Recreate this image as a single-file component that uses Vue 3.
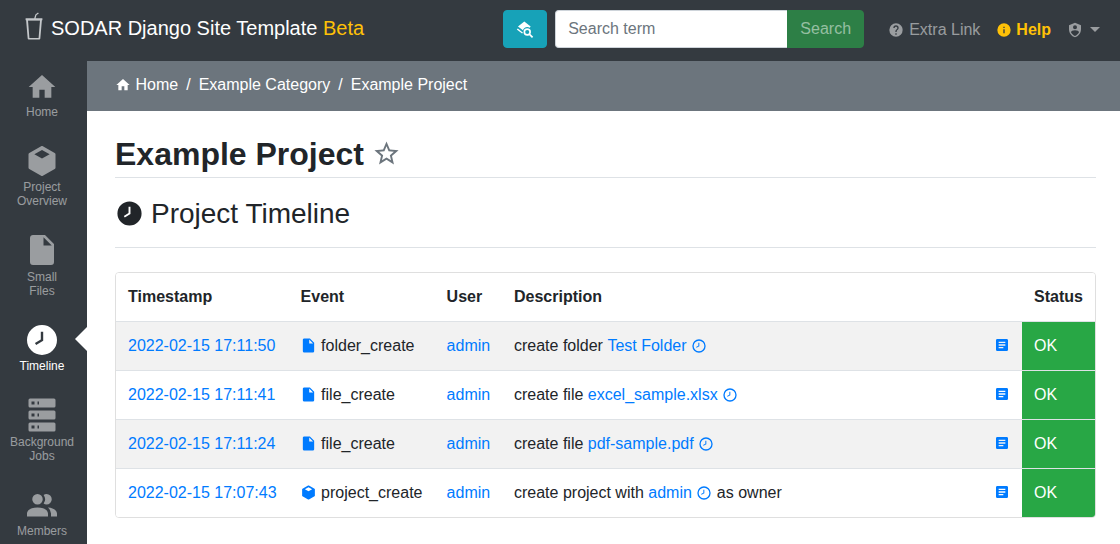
<script setup>
const P = {
  home: 'M10,20V14H14V20H19V12H22L12,3L2,12H5V20H10Z',
  cube: 'M21,16.5C21,16.88 20.79,17.21 20.47,17.38L12.57,21.82C12.41,21.94 12.21,22 12,22C11.79,22 11.59,21.94 11.43,21.82L3.53,17.38C3.21,17.21 3,16.88 3,16.5V7.5C3,7.12 3.21,6.79 3.53,6.62L11.43,2.18C11.59,2.06 11.79,2 12,2C12.21,2 12.41,2.06 12.57,2.18L20.47,6.62C20.79,6.79 21,7.12 21,7.5V16.5ZM12,4.6L6.9,7.5L12,10.4L17.1,7.5L12,4.6Z',
  file: 'M13,9V3.5L18.5,9M6,2C4.89,2 4,2.89 4,4V20A2,2 0 0,0 6,22H18A2,2 0 0,0 20,20V8L14,2H6Z',
  clock: 'M12,2A10,10 0 1,0 22,12A10,10 0 0,0 12,2ZM12.8,6.5V12.5L8.1,15.4L7.3,14L11.2,11.6V6.5H12.8Z',
  clockO: 'M12,2A10,10 0 1,0 22,12A10,10 0 0,0 12,2ZM12,20A8,8 0 1,1 20,12A8,8 0 0,1 12,20ZM12.5,7V12.3L8.3,14.8L7.6,13.6L11,11.5V7H12.5Z',
  server: 'M4,1H20A1,1 0 0,1 21,2V6A1,1 0 0,1 20,7H4A1,1 0 0,1 3,6V2A1,1 0 0,1 4,1M4,9H20A1,1 0 0,1 21,10V14A1,1 0 0,1 20,15H4A1,1 0 0,1 3,14V10A1,1 0 0,1 4,9M4,17H20A1,1 0 0,1 21,18V22A1,1 0 0,1 20,23H4A1,1 0 0,1 3,22V18A1,1 0 0,1 4,17M9,5H10V3H9V5M9,13H10V11H9V13M9,21H10V19H9V21M5,3V5H7V3H5M5,11V13H7V11H5M5,19V21H7V19H5Z',
  members: 'M16 17V19H2V17S2 13 9 13 16 17 16 17M12.5 7.5A3.5 3.5 0 1 0 9 11A3.5 3.5 0 0 0 12.5 7.5M15.94 13A5.32 5.32 0 0 1 18 17V19H22V17S22 13.37 15.94 13M15 4A3.39 3.39 0 0 0 13.07 4.59A5 5 0 0 1 13.07 10.41A3.39 3.39 0 0 0 15 11A3.5 3.5 0 0 0 15 4Z',
  help: 'M15.07,11.25L14.17,12.17C13.45,12.89 13,13.5 13,15H11V14.5C11,13.39 11.45,12.39 12.17,11.67L13.41,10.41C13.78,10.05 14,9.55 14,9C14,7.89 13.1,7 12,7A2,2 0 0,0 10,9H8A4,4 0 0,1 12,5A4,4 0 0,1 16,9C16,9.88 15.64,10.67 15.07,11.25M13,19H11V17H13M12,2A10,10 0 0,0 2,12A10,10 0 0,0 12,22A10,10 0 0,0 22,12C22,6.47 17.5,2 12,2Z',
  info: 'M13,9H11V7H13M13,17H11V11H13M12,2A10,10 0 0,0 2,12A10,10 0 0,0 12,22A10,10 0 0,0 22,12A10,10 0 0,0 12,2Z',
  star: 'M12,15.39L8.24,17.66L9.23,13.38L5.91,10.5L10.29,10.13L12,6.09L13.71,10.13L18.09,10.5L14.77,13.38L15.76,17.66M22,9.24L14.81,8.63L12,2L9.19,8.63L2,9.24L7.45,13.97L5.82,21L12,17.27L18.18,21L16.54,13.97L22,9.24Z',
  text: 'M14,17H7V15H14M17,13H7V11H17M17,9H7V7H17M19,3H5C3.89,3 3,3.89 3,5V19A2,2 0 0,0 5,21H19A2,2 0 0,0 21,19V5C21,3.89 20.1,3 19,3Z',
  shield: 'M12,1L3,5V11C3,16.55 6.84,21.74 12,23C17.16,21.74 21,16.55 21,11V5L12,1M12,5A3,3 0 0,1 15,8A3,3 0 0,1 12,11A3,3 0 0,1 9,8A3,3 0 0,1 12,5M17.13,17C15.92,18.85 14.11,20.24 12,20.92C9.89,20.24 8.08,18.85 6.87,17C6.53,16.5 6.24,16 6,15.47C6,13.82 8.71,12.47 12,12.47C15.29,12.47 18,13.79 18,15.47C17.76,16 17.47,16.5 17.13,17Z',
  search: 'M10.5,2L2.5,8.2L8.8,13.1C9.4,10.6 11.6,8.8 14.2,8.8C15.4,8.8 16.5,9.2 17.4,9.8L18.5,8.2L10.5,2ZM2.3,10.8L1,12L7.6,17.2L8.9,16L2.3,10.8ZM14.2,10.5A4.7,4.7 0 1,0 14.2,19.9C15.1,19.9 16,19.6 16.7,19.2L20.2,22.6L21.7,21.1L18.2,17.6C18.7,16.9 18.9,16.1 18.9,15.2A4.7,4.7 0 0,0 14.2,10.5ZM14.2,12.6A2.6,2.6 0 1,1 14.2,17.8A2.6,2.6 0 0,1 14.2,12.6Z'
}
const nav = [
  { label: ['Home'], icon: 'home' },
  { label: ['Project', 'Overview'], icon: 'cube' },
  { label: ['Small', 'Files'], icon: 'file' },
  { label: ['Timeline'], icon: 'clock', active: true },
  { label: ['Background', 'Jobs'], icon: 'server' },
  { label: ['Members'], icon: 'members' }
]
const rows = [
  { ts: '2022-02-15 17:11:50', icon: 'file', ev: 'folder_create', pre: 'create folder ', link: 'Test Folder', post: '' },
  { ts: '2022-02-15 17:11:41', icon: 'file', ev: 'file_create', pre: 'create file ', link: 'excel_sample.xlsx', post: '' },
  { ts: '2022-02-15 17:11:24', icon: 'file', ev: 'file_create', pre: 'create file ', link: 'pdf-sample.pdf', post: '' },
  { ts: '2022-02-15 17:07:43', icon: 'cube', ev: 'project_create', pre: 'create project with ', link: 'admin', post: 'as owner' }
]
</script>

<template>
  <div class="page">
    <header class="topbar">
      <a class="brand">
        <svg class="logo" viewBox="0 0 18 28" width="18" height="28">
          <path d="M1,7H17L15.3,26.5C15.2,27.3 14.7,27.5 14,27.5H4C3.3,27.5 2.8,27.3 2.7,26.5Z M3,8.5L4.4,25.9H13.6L15,8.5Z" fill="#c4c7ca" fill-rule="evenodd"/>
          <path d="M0.6,6.2H17.4V8.2H0.6Z M9.2,6.2L10.4,2.4L13,0.4L13.8,1.4L11.5,3.1L10.6,6.2Z" fill="#c4c7ca"/>
        </svg>
        <span>SODAR Django Site Template <em>Beta</em></span>
      </a>
      <div class="tools">
        <button class="mode" type="button">
          <svg viewBox="0 0 24 24" width="19" height="19"><path :d="P.search" fill="#fff" fill-rule="evenodd"/></svg>
        </button>
        <div class="searchgroup">
          <input class="searchinput" placeholder="Search term" />
          <button class="searchbtn" type="button">Search</button>
        </div>
        <nav class="links">
          <a class="extra"><svg viewBox="0 0 24 24" width="16" height="16"><path :d="P.help" fill="currentColor"/></svg>Extra Link</a>
          <a class="helplink"><svg viewBox="0 0 24 24" width="16" height="16"><path :d="P.info" fill="currentColor"/></svg>Help</a>
          <a class="user"><svg viewBox="0 0 24 24" width="16" height="16"><path :d="P.shield" fill="currentColor"/></svg><i class="caret"></i></a>
        </nav>
      </div>
    </header>
    <div class="body">
      <aside class="side">
        <a v-for="n in nav" :key="n.icon" class="item" :class="[{ active: n.active }, 'i-' + n.icon]">
          <svg class="sideicon" viewBox="0 0 24 24"><path :d="P[n.icon]" fill="currentColor" fill-rule="evenodd"/></svg>
          <span v-for="l in n.label" :key="l" class="lab">{{ l }}</span>
        </a>
      </aside>
      <main class="main">
        <div class="crumbs">
          <svg viewBox="0 0 24 24" width="16" height="16"><path :d="P.home" fill="#fff"/></svg>
          <a class="c1">Home</a><span class="sep">/</span><a>Example Category</a><span class="sep">/</span><a>Example Project</a>
        </div>
        <div class="content">
          <div class="titlebar">
            <h2>Example Project</h2>
            <svg viewBox="0 0 24 24" width="29" height="29"><path :d="P.star" fill="#6c757d"/></svg>
          </div>
          <div class="subbar">
            <svg viewBox="0 0 24 24" width="29" height="29"><path :d="P.clock" fill="#212529" fill-rule="evenodd"/></svg>
            <h3>Project Timeline</h3>
          </div>
          <div class="card">
            <div class="row head">
              <div class="cell">Timestamp</div>
              <div class="cell">Event</div>
              <div class="cell">User</div>
              <div class="cell">Description</div>
              <div class="cell">Status</div>
            </div>
            <div v-for="r in rows" :key="r.ts" class="row">
              <div class="cell"><a>{{ r.ts }}</a></div>
              <div class="cell ev">
                <svg viewBox="0 0 24 24" width="17" height="17"><path :d="P[r.icon]" fill="#007bff" fill-rule="evenodd"/></svg>
                <span>{{ r.ev }}</span>
              </div>
              <div class="cell"><a>admin</a></div>
              <div class="cell desc">
                <span class="dtext">{{ r.pre }}<a>{{ r.link }}</a><svg class="mini" viewBox="0 0 24 24" width="16" height="16"><path :d="P.clockO" fill="#007bff" fill-rule="evenodd"/></svg><template v-if="r.post">{{ r.post }}</template></span>
                <svg class="note" viewBox="0 0 24 24" width="16" height="16"><path :d="P.text" fill="#007bff"/></svg>
              </div>
              <div class="cell ok">OK</div>
            </div>
          </div>
        </div>
      </main>
    </div>
  </div>
</template>

<style>
html, body { margin: 0; height: 100%; overflow: hidden; background: #fff; }
</style>

<style scoped>
.page { width: 1120px; height: 544px; overflow: hidden; font-family: "Liberation Sans", Arial, sans-serif; font-size: 16px; line-height: 24px; color: #212529; display: flex; flex-direction: column; }
a { color: #007bff; text-decoration: none; }
svg { flex: none; display: block; }

.topbar { height: 61px; flex: none; background: #343a40; display: flex; align-items: center; padding: 0 20px 3px 25px; box-sizing: border-box; justify-content: space-between; }
.brand { display: flex; align-items: center; gap: 8px; color: #fff; font-size: 20px; line-height: 30px; margin-top: -2px; }
.brand em { font-style: normal; color: #ffc107; }
.logo { margin-top: -4px; }
.tools { display: flex; align-items: center; }
.mode { background: #17a2b8; border: 1px solid #17a2b8; border-radius: 4px; padding: 0; display: flex; align-items: center; justify-content: center; margin-right: 8px; box-sizing: content-box; height: 36px; width: 42px; }
.searchgroup { display: flex; height: 38px; }
.searchinput { width: 232px; height: 38px; box-sizing: border-box; border: 1px solid #ced4da; border-right: 0; border-radius: 4px 0 0 4px; padding: 6px 12px; font: 16px/24px "Liberation Sans", Arial, sans-serif; color: #495057; background: #fff; outline: none; }
.searchinput::placeholder { color: #6c757d; opacity: 1; }
.searchbtn { width: 77px; height: 38px; padding: 0; background: #2d7f46; border: 1px solid #2d7f46; border-radius: 0 4px 4px 0; color: rgba(255,255,255,.5); font: 16px/24px "Liberation Sans", Arial, sans-serif; }
.links { display: flex; align-items: center; margin-left: 24px; padding-top: 1px; }
.links a { display: flex; align-items: center; gap: 4px; }
.links .extra { color: rgba(255,255,255,.5); gap: 5px; }
.helplink { color: #ffc107; font-weight: 700; margin-left: 16px; }
.user { color: rgba(255,255,255,.5); margin-left: 16px; }
.links .user { gap: 7px; }
.caret { width: 0; height: 0; border-top: 5px solid; border-left: 5px solid transparent; border-right: 5px solid transparent; }

.body { flex: 1; display: flex; min-height: 0; }
.side { width: 87px; flex: none; background: #343a40; display: flex; flex-direction: column; align-items: stretch; }
.item { position: relative; display: flex; flex-direction: column; align-items: center; color: rgba(255,255,255,.5); font-size: 12px; line-height: 14px; text-align: center; flex: none; box-sizing: border-box; margin-right: 3px; }
.sideicon { width: 36px; height: 36px; }
.i-home { height: 75px; padding-top: 10px; }
.i-home .sideicon { width: 32px; height: 32px; margin-bottom: 2px; }
.i-cube { height: 90px; padding-top: 7px; }
.i-cube .sideicon { margin-bottom: 1px; }
.i-file { height: 90px; padding-top: 6px; }
.i-file .sideicon { margin-bottom: 2px; }
.i-clock { height: 75px; padding-top: 6px; color: #fff; }
.i-clock .sideicon { margin-bottom: 1px; }
.i-server { height: 90px; padding-top: 6px; }
.i-server .sideicon { margin-bottom: 2px; }
.i-members { height: 75px; padding-top: 7px; }
.item.active::after { content: ""; position: absolute; right: -3px; top: 11px; border-style: solid; border-width: 12px 12px 12px 0; border-color: transparent #fff transparent transparent; }

.main { flex: 1; min-width: 0; display: flex; flex-direction: column; }
.crumbs { height: 50px; flex: none; background: #6c757d; display: flex; align-items: center; padding: 0 0 2px 28px; color: #fff; box-sizing: border-box; }
.crumbs a { color: #fff; }
.crumbs .c1 { margin-left: 4.5px; }
.sep { padding: 0 8px; }
.content { padding: 0 24px 0 28px; }
.titlebar { height: 67px; border-bottom: 1px solid #dee2e6; display: flex; align-items: center; gap: 8px; box-sizing: border-box; padding-top: 19px; }
h2 { margin: 0; font-size: 32px; line-height: 38px; font-weight: 700; }
.subbar { height: 70px; border-bottom: 1px solid #dee2e6; display: flex; align-items: center; gap: 7px; box-sizing: border-box; padding-top: 2px; }
h3 { margin: 0; font-size: 28px; line-height: 34px; font-weight: 400; }
.card { margin-top: 24px; border: 1px solid #dfdfdf; border-radius: 4px; overflow: hidden; }
.row { display: grid; grid-template-columns: 172.6px 146px 67.4px 520px 1fr; height: 49px; border-top: 1px solid #dee2e6; box-sizing: border-box; background: #fff; }
.row.head { border-top: 0; height: 48px; font-weight: 700; }
.row:nth-child(even) { background: #f2f2f2; }
.cell { padding: 0 12px; display: flex; align-items: center; white-space: nowrap; min-width: 0; }
.ev { gap: 4px; padding-left: 11.5px; }
.ev svg { margin-top: -1px; }
.desc { justify-content: space-between; }
.dtext { display: inline-flex; align-items: center; white-space: pre; }
.mini { margin: -1px 5px 0 4px; }
.note { margin-top: -2px; }
.ok { background: #28a745; color: #fff; }
</style>
